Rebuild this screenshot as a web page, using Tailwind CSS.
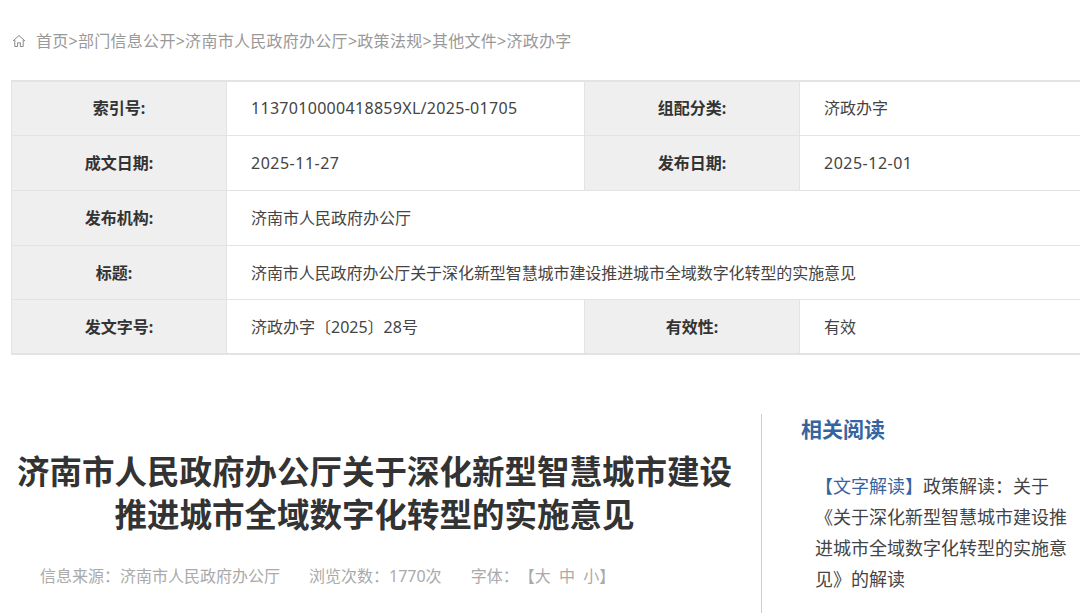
<!DOCTYPE html>
<html lang="zh-CN">
  <head>
    <meta charset="UTF-8" />
    <title>济南市人民政府办公厅关于深化新型智慧城市建设推进城市全域数字化转型的实施意见</title>
    <script src="https://cdn.jsdelivr.net/npm/@tailwindcss/browser@4"></script>
    <style>
      body {
        font-family: "Noto Sans", "Noto Sans CJK SC", sans-serif;
      }
    </style>
  </head>
  <body class="w-[1080px] h-[613px] overflow-hidden bg-white">
    <nav class="flex items-center h-[80px] pl-[12px] pt-[2px] text-[16px] text-[#999999]">
      <svg class="w-[14px] h-[14px] mr-[10px]" viewBox="0 0 14 14" fill="none" stroke="#888888" stroke-width="1">
        <path d="M1 7 L7 1.5 L13 7" />
        <path d="M2.8 6 V12.5 H5.6 V8.8 H8.4 V12.5 H11.2 V6" />
      </svg>
      <span class="whitespace-nowrap tracking-[0.28px]">首页&gt;部门信息公开&gt;济南市人民政府办公厅&gt;政策法规&gt;其他文件&gt;济政办字</span>
    </nav>

    <div class="ml-[11px] w-[1100px] border-y-2 border-l border-[#e3e3e3] text-[16px] text-[#444444]">
      <div class="grid grid-cols-[214px_358px_1px_214px_1fr] h-[54px] border-b border-[#e3e3e3]">
        <div class="flex items-center justify-center pb-[2px] bg-[#efefef] font-bold text-[#333333]">索引号:</div>
        <div class="flex items-center pl-[24px] pb-[2px] border-l border-[#e3e3e3] tracking-[0.3px]">1137010000418859XL/2025-01705</div>
        <div class="bg-[#e3e3e3]"></div>
        <div class="flex items-center justify-center pb-[2px] bg-[#efefef] font-bold text-[#333333]">组配分类:</div>
        <div class="flex items-center pl-[24px] pb-[2px] border-l border-[#e3e3e3]">济政办字</div>
      </div>
      <div class="grid grid-cols-[214px_358px_1px_214px_1fr] h-[55px] border-b border-[#e3e3e3]">
        <div class="flex items-center justify-center bg-[#efefef] font-bold text-[#333333]">成文日期:</div>
        <div class="flex items-center pl-[24px] border-l border-[#e3e3e3] tracking-[0.5px]">2025-11-27</div>
        <div class="bg-[#e3e3e3]"></div>
        <div class="flex items-center justify-center bg-[#efefef] font-bold text-[#333333]">发布日期:</div>
        <div class="flex items-center pl-[24px] border-l border-[#e3e3e3] tracking-[0.5px]">2025-12-01</div>
      </div>
      <div class="grid grid-cols-[214px_1fr] h-[55px] border-b border-[#e3e3e3]">
        <div class="flex items-center justify-center bg-[#efefef] font-bold text-[#333333]">发布机构:</div>
        <div class="flex items-center pl-[24px] border-l border-[#e3e3e3]">济南市人民政府办公厅</div>
      </div>
      <div class="grid grid-cols-[214px_1fr] h-[54px] border-b border-[#e3e3e3]">
        <div class="flex items-center justify-center pr-[10px] bg-[#efefef] font-bold text-[#333333]">标题:</div>
        <div class="flex items-center pl-[24px] border-l border-[#e3e3e3] tracking-[-0.08px]">济南市人民政府办公厅关于深化新型智慧城市建设推进城市全域数字化转型的实施意见</div>
      </div>
      <div class="grid grid-cols-[214px_358px_1px_214px_1fr] h-[53px]">
        <div class="flex items-center justify-center bg-[#efefef] font-bold text-[#333333]">发文字号:</div>
        <div class="flex items-center pl-[24px] border-l border-[#e3e3e3]">济政办字〔2025〕28号</div>
        <div class="bg-[#e3e3e3]"></div>
        <div class="flex items-center justify-center bg-[#efefef] font-bold text-[#333333]">有效性:</div>
        <div class="flex items-center pl-[24px] border-l border-[#e3e3e3]">有效</div>
      </div>
    </div>

    <div class="flex mt-[59px]">
      <main class="w-[761px] shrink-0 pl-[14px] pr-[26px]">
        <h1 class="mt-[36px] text-center text-[32.5px] leading-[43px] font-bold text-[#333333]">济南市人民政府办公厅关于深化新型智慧城市建设推进城市全域数字化转型的实施意见</h1>
        <div class="flex mt-[28px] pl-[26px] text-[16px] leading-[24px] text-[#aaaaaa] whitespace-nowrap [text-spacing-trim:space-all]">
          <span class="mr-[29px]">信息来源：济南市人民政府办公厅</span>
          <span class="mr-[29px]">浏览次数：1770次</span>
          <span>字体：【大&nbsp;&nbsp;中&nbsp;&nbsp;小】</span>
        </div>
      </main>
      <aside class="flex-1 h-[200px] border-l border-[#cccccc] pl-[39px]">
        <h2 class="text-[21px] leading-[30px] font-bold text-[#36649f]">相关阅读</h2>
        <p class="mt-[27px] ml-[14px] text-[18px] leading-[31px] text-[#444444]"><span class="text-[#36649f]">【文字解读】</span>政策解读：关于《关于深化新型智慧城市建设推进城市全域数字化转型的实施意见》的解读</p>
      </aside>
    </div>
  </body>
</html>
